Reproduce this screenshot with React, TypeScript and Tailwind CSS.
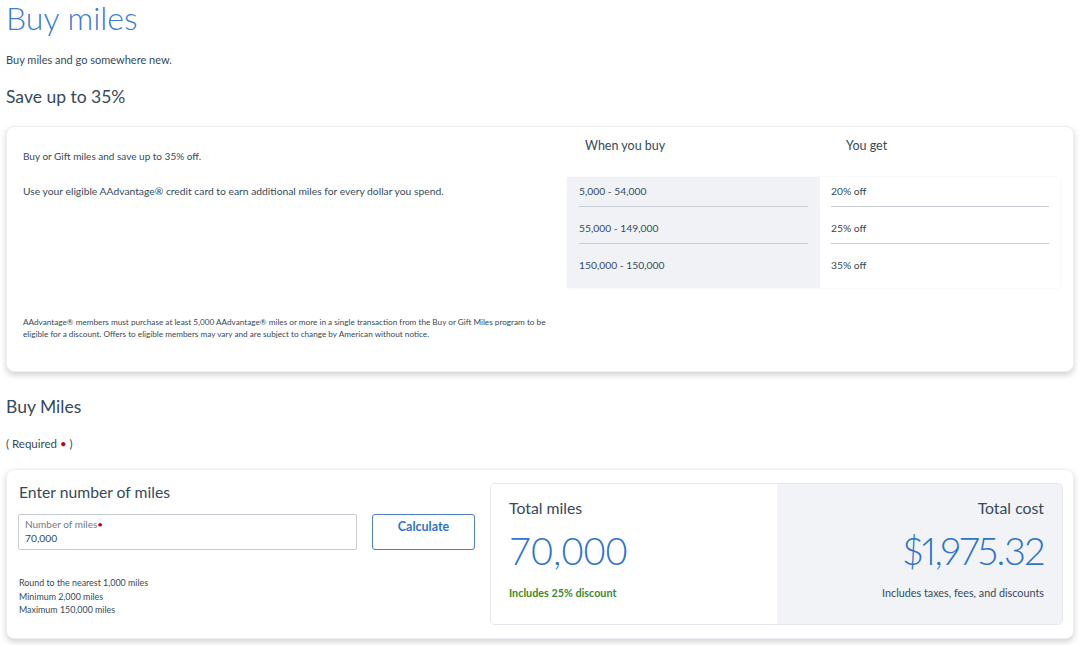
import React from "react";

const tiers = [
  { range: "5,000 - 54,000", off: "20% off" },
  { range: "55,000 - 149,000", off: "25% off" },
  { range: "150,000 - 150,000", off: "35% off" },
];

function DiscountTable() {
  return (
    <div className="w-[493px] mr-[13px] pt-[11px]">
      <div className="flex text-[12.5px] leading-[16px] text-[#36495a]">
        <div className="w-[253px] pl-[18px]">When you buy</div>
        <div className="flex-1 pl-[26px]">You get</div>
      </div>
      <div className="mt-[23px] flex rounded-[3px] shadow-[0_0_3px_rgba(0,0,0,0.06)]">
        <div className="w-[253px] bg-[#f0f2f6] px-[12px] pb-[8px] flex flex-col gap-[7px]">
          {tiers.map((t, i) => (
            <div
              key={t.range}
              className={`pt-[6px] pb-[7px] text-[10.3px] leading-[16px] text-[#36495a] ${
                i < tiers.length - 1 ? "border-b border-[#c9ced6]" : ""
              }`}
            >
              {t.range}
            </div>
          ))}
        </div>
        <div className="flex-1 bg-white px-[11px] pb-[8px] flex flex-col gap-[7px]">
          {tiers.map((t, i) => (
            <div
              key={t.off}
              className={`pt-[6px] pb-[7px] text-[10.3px] leading-[16px] text-[#36495a] ${
                i < tiers.length - 1 ? "border-b border-[#c9ced6]" : ""
              }`}
            >
              {t.off}
            </div>
          ))}
        </div>
      </div>
    </div>
  );
}

export default function App() {
  return (
    <div className="w-[1080px] min-h-[645px] bg-white font-['Lato',sans-serif] text-[#36495a]">
      <div className="px-[6px]">
        <h1 className="text-[32px] leading-[36px] font-light text-[#3b7dcc]">
          Buy miles
        </h1>
        <p className="mt-[17px] text-[11px] leading-[14px]">
          Buy miles and go somewhere new.
        </p>
        <h2 className="mt-[18px] text-[17.5px] leading-[24px] text-[#36495a]">
          Save up to 35%
        </h2>
      </div>

      {/* discount card */}
      <div className="mx-[6px] mt-[17px] flex rounded-[8px] border border-[#eceef1] bg-white shadow-[0_3px_6px_rgba(0,0,0,0.18)]">
        <div className="flex-1 pl-[16px] pt-[23px] pb-[31px]">
          <p className="text-[10px] leading-[12px]">
            Buy or Gift miles and save up to 35% off.
          </p>
          <p className="mt-[23px] text-[10.3px] leading-[12px]">
            Use your eligible AAdvantage® credit card to earn additional miles
            for every dollar you spend.
          </p>
          <p className="mt-[119px] text-[8.2px] leading-[12px]">
            AAdvantage® members must purchase at least 5,000 AAdvantage® miles
            or more in a single transaction from the Buy or Gift Miles program
            to be
            <br />
            eligible for a discount. Offers to eligible members may vary and are
            subject to change by American without notice.
          </p>
        </div>
        <DiscountTable />
      </div>

      <div className="px-[6px]">
        <h2 className="mt-[23px] text-[17.5px] leading-[24px] text-[#36495a]">
          Buy Miles
        </h2>
        <p className="mt-[18px] text-[11.5px] leading-[14px]">
          ( Required <span className="text-[#c30019]">•</span> )
        </p>
      </div>

      {/* calculator card */}
      <div className="mx-[6px] mt-[18px] mb-[6px] flex gap-[15px] rounded-[8px] border border-[#eceef1] bg-white py-[13px] pl-[11px] pr-[10px] shadow-[0_3px_6px_rgba(0,0,0,0.18)]">
        <div className="w-[457px]">
          <h3 className="pl-[1px] text-[15.7px] leading-[18px]">
            Enter number of miles
          </h3>
          <div className="mt-[13px] flex gap-[15px]">
            <div className="flex-1 h-[36px] rounded-[2px] border border-[#c8cdd3] px-[6px] pt-[3px]">
              <div className="text-[10px] leading-[13px] text-[#6e7b88]">
                Number of miles<span className="text-[#c30019]">•</span>
              </div>
              <div className="text-[10.3px] leading-[14px] text-[#36495a]">
                70,000
              </div>
            </div>
            <button className="w-[103px] h-[36px] rounded-[3px] border border-[#4d81c4] pb-[10px] text-[12.5px] font-bold text-[#2e74c8]">
              Calculate
            </button>
          </div>
          <div className="mt-[26px] pl-[1px] text-[8.9px] leading-[13.5px]">
            <div>Round to the nearest 1,000 miles</div>
            <div>Minimum 2,000 miles</div>
            <div>Maximum 150,000 miles</div>
          </div>
        </div>

        <div className="flex-1 grid grid-cols-2 h-[142px] rounded-[5px] border border-[#e4e7eb] overflow-hidden">
          <div className="bg-white pl-[18px] pt-[14px]">
            <div className="text-[15.8px] leading-[20px]">Total miles</div>
            <div className="mt-[8px] text-[38px] leading-[48px] font-light text-[#2f74c9]">
              70,000
            </div>
            <div className="mt-[12px] text-[10.8px] leading-[14px] font-bold text-[#3c8a2e]">
              Includes 25% discount
            </div>
          </div>
          <div className="bg-[#f1f3f7] pr-[18px] pt-[14px] text-right">
            <div className="text-[15.8px] leading-[20px]">Total cost</div>
            <div className="mt-[8px] text-[38px] leading-[48px] font-light tracking-[-1.5px] [font-variant-numeric:proportional-nums] text-[#2f74c9]">
              $1,975.32
            </div>
            <div className="mt-[12px] text-[10.8px] leading-[14px]">
              Includes taxes, fees, and discounts
            </div>
          </div>
        </div>
      </div>
    </div>
  );
}
